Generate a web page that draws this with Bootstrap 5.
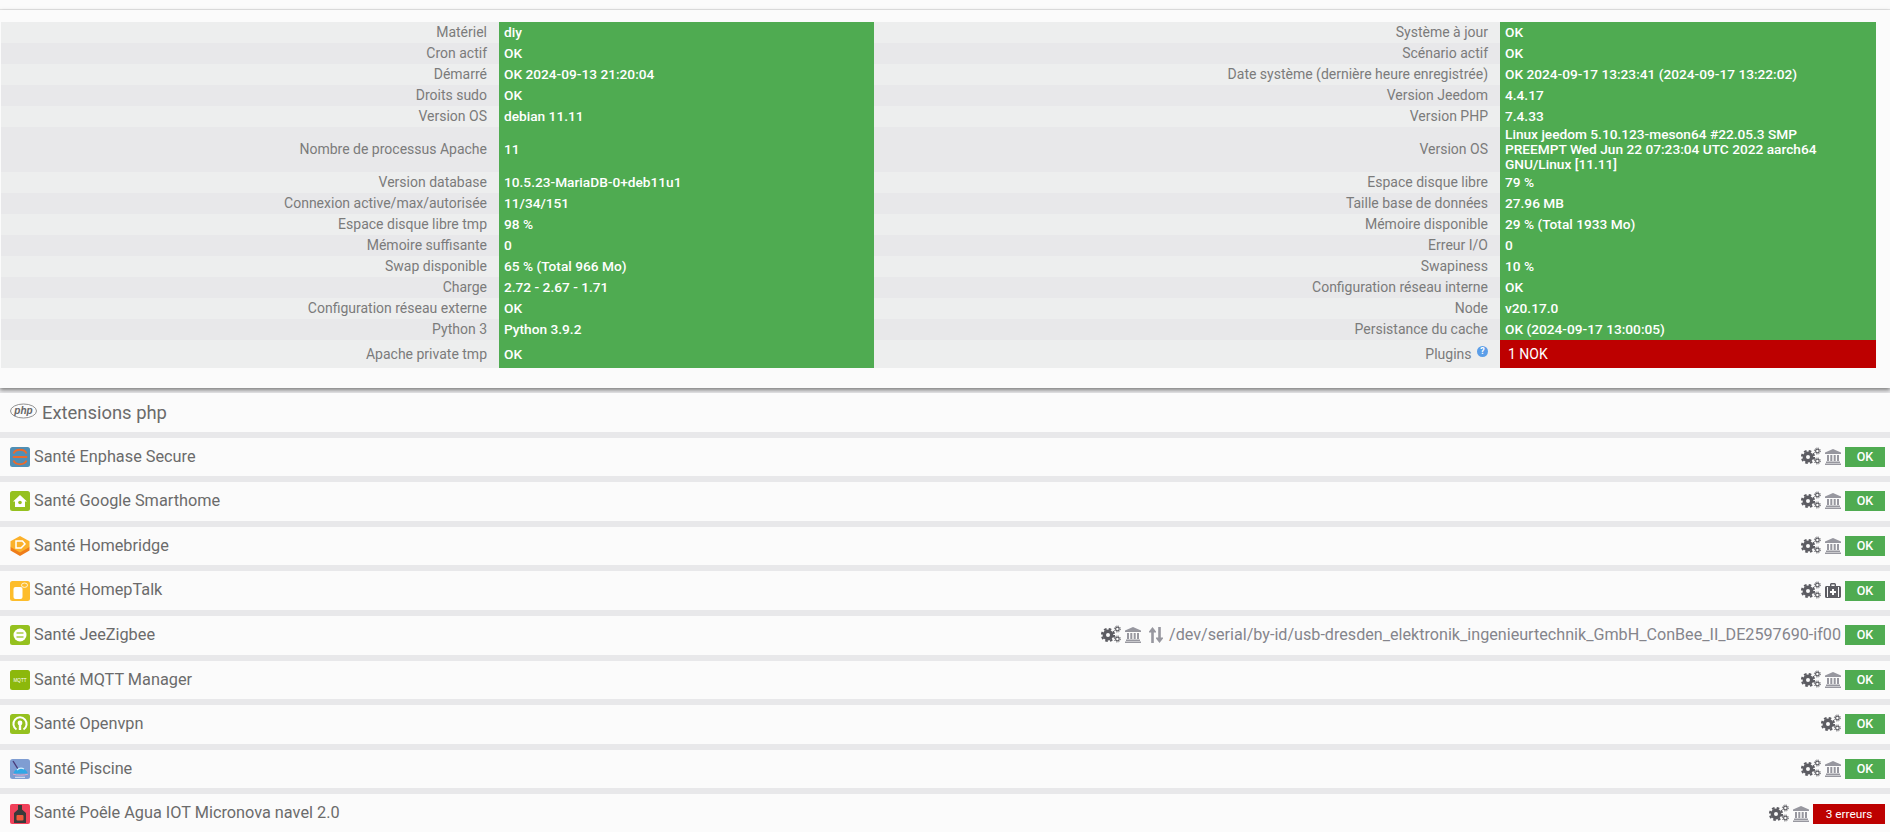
<!DOCTYPE html>
<html lang="fr">
<head>
<meta charset="utf-8">
<title>Santé</title>
<link href="https://cdn.jsdelivr.net/npm/bootstrap@5.3.0/dist/css/bootstrap.min.css" rel="stylesheet">
<style>
html,body{height:832px;overflow:hidden}
body{background:#e8e8ea;font-family:Roboto,"Liberation Sans",sans-serif;color:#666;font-size:14px}
.topstrip{height:10px;background:#fbfbfb;border-bottom:1px solid #e6e6e6}
.main-sheet{background:#fbfbfb;height:378px;padding:12px 14px 0 1px;box-shadow:0 2px 4px 0 #7d7d7d;margin-bottom:5px}
.health-table{table-layout:fixed;width:1875px;margin:0;font-size:14px;line-height:15px;border-collapse:collapse}
.health-table td{padding:0;height:21px;border:0;vertical-align:middle;box-shadow:none}
.health-table tr:nth-child(odd) td{background:#edeeee}
.health-table tr:nth-child(even) td{background:#e8e8ea}
.health-table td.lbl{text-align:right;padding-right:12px;color:#7b7b7b}
.health-table tr td.val{background:#4fab51;color:#fff;font-weight:500;font-size:13.7px;padding-left:5px;padding-right:40px}
.health-table tr td.bad{background:#bd0000;color:#fff;padding-left:8px;font-weight:400;font-size:14px}
.health-table tr.tall td{height:28px}
.help-dot{display:inline-block;width:11px;height:11px;border-radius:50%;background:#5b9ee8;color:#fff;font-size:9px;line-height:11px;text-align:center;font-weight:700;vertical-align:5px;margin-left:2px}
.pane{background:#fbfbfb;height:38.6px;margin-bottom:6px;padding:0 5px 0 10px;font-size:16.3px;color:#6b6b6b}
.pane-title{font-size:18.4px;padding-top:1px}
.plug{width:20px;height:20px;display:block;margin-right:4px;flex:none}
.phpmark{width:27px;height:16px;margin-right:5px;flex:none;margin-bottom:4px}
.tool{display:block;flex:none;fill:#5c5c62}
.tool-cogs{margin-bottom:2px}
.tool-soft{fill:#97979f}
.stat{display:inline-block;height:20px;line-height:20px;text-align:center;color:#fff;font-size:12.5px;font-weight:500;background:#4fab51;width:40px}
.stat.err{background:#bd0000;width:72px;font-weight:400;font-size:11.8px}
.devpath{color:#85858c;font-size:16.15px;margin-left:2px}
</style>
</head>
<body>
<svg width="0" height="0" class="position-absolute">
<defs>
<symbol id="cogs" viewBox="0 0 20 18">
<g fill="none" stroke="#5c5c62">
<circle cx="7" cy="10" r="3.7" stroke-width="3.4"/>
<circle cx="7" cy="10" r="6.1" stroke-width="2" stroke-dasharray="2.6 2.19"/>
<circle cx="16.4" cy="4" r="1.8" stroke-width="1.2"/>
<circle cx="16.4" cy="4" r="3" stroke-width="1" stroke-dasharray="1.2 1.15"/>
<circle cx="16.4" cy="14" r="1.8" stroke-width="1.2"/>
<circle cx="16.4" cy="14" r="3" stroke-width="1" stroke-dasharray="1.2 1.15"/>
</g>
</symbol>
<symbol id="bank" viewBox="0 0 16 16">
<path d="M8 0 16 3.6V5H0V3.6ZM1 12.6H15V14H1ZM0 14.6H16V16H0ZM2 6H4V12H2ZM5.3 6H7.3V12H5.3ZM8.7 6H10.7V12H8.7ZM12 6H14V12H12Z"/>
</symbol>
<symbol id="medkit" viewBox="0 0 16 16">
<path fill-rule="evenodd" d="M5 3V1.6C5 .8 5.6 0 6.4 0H9.6C10.4 0 11 .8 11 1.6V3H14.5C15.3 3 16 3.7 16 4.5V13.5C16 14.3 15.3 15 14.5 15H1.5C.7 15 0 14.3 0 13.5V4.5C0 3.7.7 3 1.5 3ZM6.4 1.5V3H9.6V1.5ZM3 4H2V14H3ZM14 4H13V14H14ZM7 6V8H5V10H7V12H9V10H11V8H9V6Z"/>
</symbol>
<symbol id="updown" viewBox="0 0 14 16">
<path d="M3.5 0 7 4.4V5.5H4.8V16H2.2V5.5H0V4.4ZM10.5 16 14 11.6V10.5H11.8V0H9.2V10.5H7V11.6Z"/>
</symbol>
</defs>
</svg>
<div class="topstrip"></div>
<div class="main-sheet">
<table class="table health-table">
<colgroup><col style="width:498px"><col style="width:375px"><col style="width:626px"><col style="width:376px"></colgroup>
<tbody>
<tr><td class="lbl">Matériel</td><td class="val">diy</td><td class="lbl">Système à jour</td><td class="val">OK</td></tr>
<tr><td class="lbl">Cron actif</td><td class="val">OK</td><td class="lbl">Scénario actif</td><td class="val">OK</td></tr>
<tr><td class="lbl">Démarré</td><td class="val">OK 2024-09-13 21:20:04</td><td class="lbl">Date système (dernière heure enregistrée)</td><td class="val">OK 2024-09-17 13:23:41 (2024-09-17 13:22:02)</td></tr>
<tr><td class="lbl">Droits sudo</td><td class="val">OK</td><td class="lbl">Version Jeedom</td><td class="val">4.4.17</td></tr>
<tr><td class="lbl">Version OS</td><td class="val">debian 11.11</td><td class="lbl">Version PHP</td><td class="val">7.4.33</td></tr>
<tr><td class="lbl">Nombre de processus Apache</td><td class="val">11</td><td class="lbl">Version OS</td><td class="val">Linux jeedom 5.10.123-meson64 #22.05.3 SMP PREEMPT Wed Jun 22 07:23:04 UTC 2022 aarch64 GNU/Linux [11.11]</td></tr>
<tr><td class="lbl">Version database</td><td class="val">10.5.23-MariaDB-0+deb11u1</td><td class="lbl">Espace disque libre</td><td class="val">79 %</td></tr>
<tr><td class="lbl">Connexion active/max/autorisée</td><td class="val">11/34/151</td><td class="lbl">Taille base de données</td><td class="val">27.96 MB</td></tr>
<tr><td class="lbl">Espace disque libre tmp</td><td class="val">98 %</td><td class="lbl">Mémoire disponible</td><td class="val">29 % (Total 1933 Mo)</td></tr>
<tr><td class="lbl">Mémoire suffisante</td><td class="val">0</td><td class="lbl">Erreur I/O</td><td class="val">0</td></tr>
<tr><td class="lbl">Swap disponible</td><td class="val">65 % (Total 966 Mo)</td><td class="lbl">Swapiness</td><td class="val">10 %</td></tr>
<tr><td class="lbl">Charge</td><td class="val">2.72 - 2.67 - 1.71</td><td class="lbl">Configuration réseau interne</td><td class="val">OK</td></tr>
<tr><td class="lbl">Configuration réseau externe</td><td class="val">OK</td><td class="lbl">Node</td><td class="val">v20.17.0</td></tr>
<tr><td class="lbl">Python 3</td><td class="val">Python 3.9.2</td><td class="lbl">Persistance du cache</td><td class="val">OK (2024-09-17 13:00:05)</td></tr>
<tr class="tall"><td class="lbl">Apache private tmp</td><td class="val">OK</td><td class="lbl">Plugins <span class="help-dot">?</span></td><td class="val bad">1 NOK</td></tr>
</tbody>
</table>
</div>

<section class="pane pane-title d-flex align-items-center">
<svg class="phpmark" viewBox="0 0 27 16"><ellipse cx="13.5" cy="8" rx="13" ry="7" fill="#fbfbfb" stroke="#777" stroke-width=".8"/><text x="13.5" y="11" text-anchor="middle" font-size="10" font-style="italic" font-weight="700" font-family="Liberation Sans, sans-serif" fill="#666">php</text></svg>
<span>Extensions php</span>
</section>

<section class="pane d-flex align-items-center">
<svg class="plug" viewBox="0 0 20 20"><rect width="20" height="20" rx="2.5" fill="#4f8fb5"/><path d="M2.8 10H17.2M16.5 6.5C14.5 1.5 5.5 1.5 3.5 6.5M3.5 13.5C5.5 18.5 14.5 18.5 16.5 13.5" fill="none" stroke="#ea6a2c" stroke-width="2"/></svg>
<span>Santé Enphase Secure</span>
<div class="ms-auto d-flex align-items-center gap-1"><svg class="tool tool-cogs" width="20" height="18"><use href="#cogs"/></svg><svg class="tool tool-soft" width="16" height="16"><use href="#bank"/></svg><span class="stat">OK</span></div>
</section>

<section class="pane d-flex align-items-center">
<svg class="plug" viewBox="0 0 20 20"><rect width="20" height="20" rx="2.5" fill="#95c11f"/><path d="M10 4 17 10.5H15V16H5V10.5H3Z" fill="#fff"/><circle cx="10" cy="11.5" r="1.8" fill="#95c11f"/></svg>
<span>Santé Google Smarthome</span>
<div class="ms-auto d-flex align-items-center gap-1"><svg class="tool tool-cogs" width="20" height="18"><use href="#cogs"/></svg><svg class="tool tool-soft" width="16" height="16"><use href="#bank"/></svg><span class="stat">OK</span></div>
</section>

<section class="pane d-flex align-items-center">
<svg class="plug" viewBox="0 0 20 20"><path d="M10 6 19.5 11V14.5L10 20 .5 14.5V11Z" fill="#ef7d1a"/><path d="M10 0 19.5 5.2V11L10 16.5 .5 11V5.2Z" fill="#fbb12b"/><path d="M6 5H12.5L15 8 11 12H6Z" fill="none" stroke="#fff" stroke-width="1.5"/></svg>
<span>Santé Homebridge</span>
<div class="ms-auto d-flex align-items-center gap-1"><svg class="tool tool-cogs" width="20" height="18"><use href="#cogs"/></svg><svg class="tool tool-soft" width="16" height="16"><use href="#bank"/></svg><span class="stat">OK</span></div>
</section>

<section class="pane d-flex align-items-center">
<svg class="plug" viewBox="0 0 20 20"><rect width="20" height="20" rx="2.5" fill="#fdbd2c"/><rect x="3.5" y="6" width="9" height="12" rx="2" fill="#fff"/><ellipse cx="14.5" cy="4.2" rx="3" ry="2.2" fill="none" stroke="#fff" stroke-width=".8"/></svg>
<span>Santé HomepTalk</span>
<div class="ms-auto d-flex align-items-center gap-1"><svg class="tool tool-cogs" width="20" height="18"><use href="#cogs"/></svg><svg class="tool" width="16" height="16"><use href="#medkit"/></svg><span class="stat">OK</span></div>
</section>

<section class="pane d-flex align-items-center">
<svg class="plug" viewBox="0 0 20 20"><rect width="20" height="20" rx="2.5" fill="#95c11f"/><circle cx="10" cy="10" r="6.5" fill="#fff"/><path d="M6.5 8H13.5M6.5 12H13.5" stroke="#a9cf45" stroke-width="1.4"/></svg>
<span>Santé JeeZigbee</span>
<div class="ms-auto d-flex align-items-center gap-1"><svg class="tool tool-cogs" width="20" height="18"><use href="#cogs"/></svg><svg class="tool tool-soft" width="16" height="16"><use href="#bank"/></svg><svg class="tool tool-soft ms-1" width="14" height="16"><use href="#updown"/></svg><span class="devpath">/dev/serial/by-id/usb-dresden_elektronik_ingenieurtechnik_GmbH_ConBee_II_DE2597690-if00</span><span class="stat">OK</span></div>
</section>

<section class="pane d-flex align-items-center">
<svg class="plug" viewBox="0 0 20 20"><rect width="20" height="20" rx="2.5" fill="#8cb80c"/><text x="10" y="11.6" text-anchor="middle" font-size="4.6" font-family="Liberation Sans, sans-serif" fill="#fff">MQTT</text></svg>
<span>Santé MQTT Manager</span>
<div class="ms-auto d-flex align-items-center gap-1"><svg class="tool tool-cogs" width="20" height="18"><use href="#cogs"/></svg><svg class="tool tool-soft" width="16" height="16"><use href="#bank"/></svg><span class="stat">OK</span></div>
</section>

<section class="pane d-flex align-items-center">
<svg class="plug" viewBox="0 0 20 20"><rect width="20" height="20" rx="2.5" fill="#95c11f"/><path d="M6.5 15.5A6.6 6.6 0 1 1 13.5 15.5" fill="none" stroke="#fff" stroke-width="2"/><path d="M8.8 9H11.2V16H8.8Z" fill="#fff"/><circle cx="10" cy="9" r="2.4" fill="#fff"/></svg>
<span>Santé Openvpn</span>
<div class="ms-auto d-flex align-items-center gap-1"><svg class="tool tool-cogs" width="20" height="18"><use href="#cogs"/></svg><span class="stat">OK</span></div>
</section>

<section class="pane d-flex align-items-center">
<svg class="plug" viewBox="0 0 20 20"><rect width="20" height="20" rx="2.5" fill="#7f9dd2"/><path d="M3 2 8 10" stroke="#4a3a78" stroke-width="1.3"/><path d="M3.5 14.5C5 8 15 7 18 14.5Z" fill="#2fa8e6"/><path d="M7 11C9 9 12 9 14 10" stroke="#cfeefc" stroke-width="1.2" fill="none"/><path d="M3 15.2C7 16.5 14 16.5 18 15.2" stroke="#e0a8c8" stroke-width="1" fill="none"/><rect x="5" y="17.8" width="10" height="1" fill="#dfe8f7"/></svg>
<span>Santé Piscine</span>
<div class="ms-auto d-flex align-items-center gap-1"><svg class="tool tool-cogs" width="20" height="18"><use href="#cogs"/></svg><svg class="tool tool-soft" width="16" height="16"><use href="#bank"/></svg><span class="stat">OK</span></div>
</section>

<section class="pane d-flex align-items-center">
<svg class="plug" viewBox="0 0 20 20"><rect width="20" height="20" rx="2" fill="#f1415a"/><path d="M8 1H12V5.5L16 9V19H4V9L8 5.5Z" fill="#3a3a3a"/><rect x="6.5" y="11" width="7" height="5.5" rx="1" fill="#ee5a3a"/></svg>
<span>Santé Poêle Agua IOT Micronova navel 2.0</span>
<div class="ms-auto d-flex align-items-center gap-1"><svg class="tool tool-cogs" width="20" height="18"><use href="#cogs"/></svg><svg class="tool tool-soft" width="16" height="16"><use href="#bank"/></svg><span class="stat err">3 erreurs</span></div>
</section>
</body>
</html>
